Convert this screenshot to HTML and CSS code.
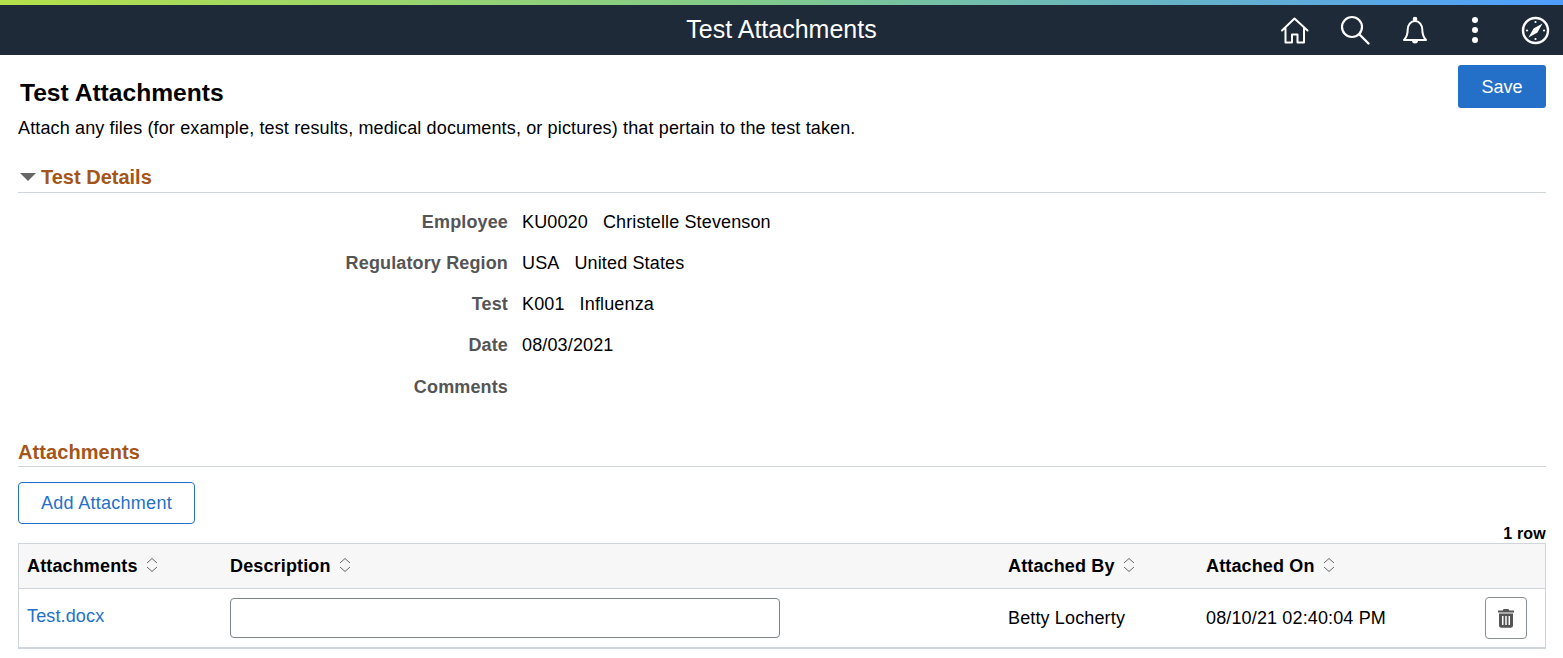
FILE: index.html
```html
<!DOCTYPE html>
<html lang="en">
<head>
<meta charset="utf-8">
<title>Test Attachments</title>
<link rel="stylesheet" href="styles.css">
</head>
<body>
<header class="banner">
  <div class="banner-title">Test Attachments</div>
  <nav class="banner-icons">
    <svg class="ico" viewBox="0 0 30 30"><path d="M2 15.500 14.500 3.500 27.500 15.500M5.500 13.500V27.500h6.500V19.500h5.500V27.500h6.500V13.500" fill="none" stroke="#fff" stroke-width="2" stroke-linejoin="round" stroke-linecap="round"/></svg>
    <svg class="ico" viewBox="0 0 30 30"><circle cx="12" cy="12" r="10" fill="none" stroke="#fff" stroke-width="2.200"/><path d="m19.500 19.500 9 9" stroke="#fff" stroke-width="2.400" stroke-linecap="round"/></svg>
    <svg class="ico" viewBox="0 0 30 30"><path d="M4 25c2.800-3 3.700-5.500 3.700-10.500 0-4.500 3-8.500 7.300-8.500s7.300 4 7.300 8.500c0 5 .9 7.500 3.700 10.500z" fill="none" stroke="#fff" stroke-width="2" stroke-linejoin="round"/><circle cx="15" cy="4" r="2.300" fill="#fff"/><path d="M12 25.500a3 3 0 0 0 6 0z" fill="#fff"/></svg>
    <svg class="ico" viewBox="0 0 30 30"><circle cx="15" cy="5" r="3" fill="#fff"/><circle cx="15" cy="15" r="3" fill="#fff"/><circle cx="15" cy="25" r="3" fill="#fff"/></svg>
    <svg class="ico" viewBox="0 0 30 30"><circle cx="15.500" cy="15.500" r="12.500" fill="none" stroke="#fff" stroke-width="2.400"/><path d="M22.500 8.500 17.500 17.500 8.500 22.500 13.500 13.500z" fill="#fff"/><circle cx="15.500" cy="7" r="1.100" fill="#fff"/><circle cx="15.500" cy="24" r="1.100" fill="#fff"/><circle cx="7" cy="15.500" r="1.100" fill="#fff"/><circle cx="24" cy="15.500" r="1.100" fill="#fff"/></svg>
  </nav>
</header>
<main class="page">
  <div class="title-row">
    <h1 class="page-title">Test Attachments</h1>
    <button class="btn-primary">Save</button>
  </div>
  <p class="intro">Attach any files (for example, test results, medical documents, or pictures) that pertain to the test taken.</p>

  <h2 class="section-head details-head"><span class="caret"></span>Test Details</h2>
  <dl class="details">
    <dt>Employee</dt><dd><span>KU0020</span><span>Christelle Stevenson</span></dd>
    <dt>Regulatory Region</dt><dd><span>USA</span><span>United States</span></dd>
    <dt>Test</dt><dd><span>K001</span><span>Influenza</span></dd>
    <dt>Date</dt><dd><span>08/03/2021</span></dd>
    <dt>Comments</dt><dd></dd>
  </dl>

  <h2 class="section-head attach-head">Attachments</h2>
  <button class="btn-secondary">Add Attachment</button>
  <div class="row-count">1 row</div>
  <div class="grid">
    <div class="grid-row grid-header">
      <div class="cell">Attachments<svg class="sort" viewBox="0 0 14 16"><path d="M2 6 7 1.500 12 6M2 10l5 4.500 5-4.500" fill="none" stroke="#666" stroke-width="1"/></svg></div>
      <div class="cell">Description<svg class="sort" viewBox="0 0 14 16"><path d="M2 6 7 1.500 12 6M2 10l5 4.500 5-4.500" fill="none" stroke="#666" stroke-width="1"/></svg></div>
      <div class="cell">Attached By<svg class="sort" viewBox="0 0 14 16"><path d="M2 6 7 1.500 12 6M2 10l5 4.500 5-4.500" fill="none" stroke="#666" stroke-width="1"/></svg></div>
      <div class="cell">Attached On<svg class="sort" viewBox="0 0 14 16"><path d="M2 6 7 1.500 12 6M2 10l5 4.500 5-4.500" fill="none" stroke="#666" stroke-width="1"/></svg></div>
      <div class="cell"></div>
    </div>
    <div class="grid-row grid-body">
      <div class="cell file-cell"><a class="file-link" href="#">Test.docx</a></div>
      <div class="cell"><input class="desc-input" type="text"></div>
      <div class="cell">Betty Locherty</div>
      <div class="cell">08/10/21 02:40:04 PM</div>
      <div class="cell">
        <button class="btn-icon" aria-label="Delete"><svg viewBox="0 0 18 20" class="trash"><path d="M6.500 1h5l.8 1.500H17v2H1v-2h4.700z" fill="#555"/><path fill-rule="evenodd" d="M2 5.500h14v12a2.200 2.200 0 0 1-2.200 2.200H4.200A2.200 2.200 0 0 1 2 17.500zM5 8v9h1.500V8zm3.250 0v9h1.500V8zm3.250 0v9H13V8z" fill="#555"/></svg></button>
      </div>
    </div>
  </div>
</main>
</body>
</html>
```
FILE: styles.css
```css
* { box-sizing: border-box; }
html, body { margin: 0; padding: 0; }
body {
  background: #fff;
  color: #000;
  font-family: "Liberation Sans", Arial, sans-serif;
  font-size: 18px;
  letter-spacing: .14px;
  height: 658px;
  overflow: hidden;
}
.banner {
  height: 55px;
  background: #1e2a38;
  border-top: 5px solid;
  border-image: linear-gradient(90deg, #b5e04a 0%, #7fc98f 50%, #4d9dff 100%) 1;
  display: flex;
  align-items: center;
  justify-content: center;
  padding-bottom: 2px;
  position: relative;
}
.banner-title { color: #fff; font-size: 25px; letter-spacing: 0; }
.banner-icons {
  position: absolute;
  right: 13px;
  top: 10px;
  display: flex;
  gap: 30px;
}
.ico { width: 30px; height: 30px; display: block; }
.page { padding: 10px 17px 0 18px; }
.title-row { display: flex; justify-content: space-between; align-items: flex-start; height: 43px; }
.page-title { margin: 14px 0 0 2px; font-size: 24.600px; line-height: 28px; font-weight: 700; letter-spacing: 0; }
.btn-primary {
  width: 88px;
  height: 43px;
  border: 0;
  border-radius: 3px;
  padding: 2px 0 0;
  background: #2470c9;
  color: #fff;
  font: 18px "Liberation Sans", Arial, sans-serif;
}
.intro { margin: 8px 0 0; line-height: 24px; }
.section-head {
  margin: 0;
  color: #a4561a;
  font-size: 20px;
  line-height: 24px;
  font-weight: 700;
  letter-spacing: 0;
  border-bottom: 1px solid #d0d4db;
}
.attach-head { letter-spacing: .08px; }
.details-head { margin-top: 24px; height: 29px; padding-bottom: 3px; display: flex; align-items: center; }
.caret {
  width: 0;
  height: 0;
  margin: 0 5px 0 2px;
  border-left: 8px solid transparent;
  border-right: 8px solid transparent;
  border-top: 8px solid #666;
}
.details {
  margin: 0;
  display: grid;
  grid-template-columns: 490px 1fr;
  grid-auto-rows: 41.250px;
  column-gap: 14px;
  padding-top: 8.400px;
  align-items: center;
}
.details dt { text-align: right; font-weight: 700; color: #555; }
.details dd { margin: 0; display: flex; gap: 15px; }
.attach-head { margin-top: 30.600px; height: 29px; padding-top: 2px; }
.btn-secondary {
  display: block;
  margin-top: 15px;
  width: 177px;
  height: 42px;
  padding-top: 2px;
  background: #fff;
  border: 1px solid #2470c9;
  border-radius: 4px;
  color: #2470c9;
  font: 18px "Liberation Sans", Arial, sans-serif;
  letter-spacing: .28px;
}
.row-count { text-align: right; font-weight: 700; font-size: 16px; line-height: 20px; height: 19px; letter-spacing: .2px; }
.grid { border: 1px solid #d0d4db; border-bottom-width: 2px; }
.grid-row { display: grid; grid-template-columns: 203px 778px 198px 279px 1fr; align-items: center; }
.grid-header { height: 45px; background: #f7f7f7; border-bottom: 1px solid #d0d4db; font-weight: 700; }
.grid-body { height: 58px; }
.cell { padding-left: 8px; display: flex; align-items: center; }
.sort { width: 14px; height: 16px; margin: -2px 0 0 7px; }
.file-link { color: #2470c9; text-decoration: none; position: relative; top: -2px; }
.desc-input {
  width: 550px;
  height: 40px;
  border: 1px solid #7d848c;
  border-radius: 4px;
  background: #fff;
}
.btn-icon {
  width: 42px;
  height: 42px;
  background: #fff;
  border: 1px solid #8a8f96;
  border-radius: 4px;
  padding: 0;
  display: flex;
  align-items: center;
  justify-content: center;
}
.trash { width: 18px; height: 20px; }
```
